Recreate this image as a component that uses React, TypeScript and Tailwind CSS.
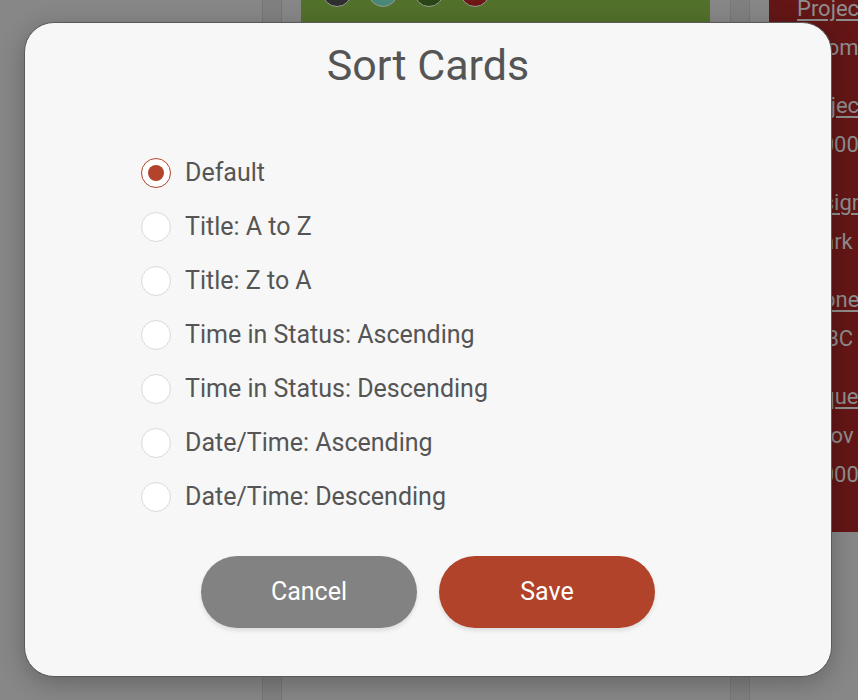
import { useState } from "react"

const options = [
  "Default",
  "Title: A to Z",
  "Title: Z to A",
  "Time in Status: Ascending",
  "Time in Status: Descending",
  "Date/Time: Ascending",
  "Date/Time: Descending",
]

const cardGroups = [
  { label: "Project", values: ["Income"] },
  { label: "Project ID", values: ["20000"] },
  { label: "Assigned To", values: ["Shark"] },
  { label: "Phone", values: ["XABC"] },
  { label: "Requested", values: ["1 Nov", "20000"] },
]

function Board() {
  return (
    <div className="flex h-[700px] w-full bg-[#878787]">
      <div className="w-[262px] shrink-0" />
      <div className="w-[20px] shrink-0 border-x border-[#777] bg-[#808080]" />
      <div className="w-[19px] shrink-0" />
      {/* green card */}
      <div className="relative h-[22px] w-[409px] shrink-0 bg-[#52712a]">
        <div className="absolute -top-[23px] left-[21px] flex gap-[16px]">
          <span className="h-[30px] w-[30px] rounded-full border border-[#999] bg-[#2f2f2f]" />
          <span className="h-[30px] w-[30px] rounded-full border border-[#999] bg-[#4a897a]" />
          <span className="h-[30px] w-[30px] rounded-full border border-[#999] bg-[#2b4615]" />
          <span className="h-[30px] w-[30px] rounded-full border border-[#999] bg-[#6e1717]" />
        </div>
      </div>
      <div className="w-[20px] shrink-0" />
      <div className="w-[20px] shrink-0 border-x border-[#777] bg-[#808080]" />
      <div className="w-[19px] shrink-0" />
      {/* red card */}
      <div className="h-[532px] flex-1 overflow-hidden bg-[#641616] pl-[28px]">
        <div className="-mt-[11px] flex flex-col gap-[19px] whitespace-nowrap text-[22px] leading-[39px] text-[#8e8e8e]">
          {cardGroups.map((g) => (
            <div key={g.label} className="flex flex-col">
              <span className="underline underline-offset-[3px]">{g.label}</span>
              {g.values.map((v) => (
                <span key={v}>{v}</span>
              ))}
            </div>
          ))}
        </div>
      </div>
    </div>
  )
}

export default function App() {
  const [selected, setSelected] = useState(0)

  return (
    <div className="relative h-[700px] w-[858px] overflow-hidden font-['Roboto','Liberation_Sans',sans-serif]">
      <Board />

      {/* modal */}
      <div className="absolute left-[24px] top-[22px] flex h-[655px] w-[808px] flex-col items-center rounded-[30px] border border-[#5a5a5a] bg-[#f7f7f7] shadow-[0_6px_24px_rgba(0,0,0,0.25)]">
        <h2 className="mt-[16px] text-[43px] leading-[52px] text-[#555]">Sort Cards</h2>

        <div className="mt-[55px] flex w-full flex-col pl-[116px]">
          {options.map((opt, i) => (
            <label
              key={opt}
              className="flex h-[54px] cursor-pointer items-center gap-[14px]"
              onClick={() => setSelected(i)}
            >
              <span
                className={
                  i === selected
                    ? "flex h-[30px] w-[30px] items-center justify-center rounded-full border border-[#b3432a] bg-white"
                    : "flex h-[30px] w-[30px] items-center justify-center rounded-full border border-[#d9d9d9] bg-white"
                }
              >
                {i === selected && <span className="h-[16px] w-[16px] rounded-full bg-[#b3432a]" />}
              </span>
              <span className="text-[25px] text-[#555]">{opt}</span>
            </label>
          ))}
        </div>

        <div className="mt-[32px] flex gap-[22px]">
          <button className="h-[72px] w-[216px] rounded-full bg-[#828282] text-[25px] text-white shadow-[0_3px_4px_rgba(0,0,0,0.1)]">
            Cancel
          </button>
          <button className="h-[72px] w-[216px] rounded-full bg-[#b1432a] text-[25px] text-white shadow-[0_3px_4px_rgba(0,0,0,0.1)]">
            Save
          </button>
        </div>
      </div>
    </div>
  )
}
